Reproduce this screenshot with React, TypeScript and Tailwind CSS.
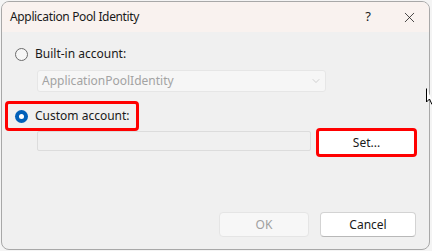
import { ChevronDown, X } from 'lucide-react'

function Radio({ checked }: { checked?: boolean }) {
  if (checked) {
    return (
      <span className="flex h-[13px] w-[13px] items-center justify-center rounded-full bg-[#005fb8]">
        <span className="h-[5px] w-[5px] rounded-full bg-white" />
      </span>
    )
  }
  return <span className="h-[13px] w-[13px] rounded-full border border-[#6b6b6b] bg-[#f6f6f6]" />
}

export default function App() {
  return (
    <div className="relative h-[251px] w-[432px] overflow-hidden bg-[#f4f4f4] text-[12px] text-[#1a1a1a]" style={{ fontFamily: '"Noto Sans", Arial, sans-serif' }}>
      <div className="ml-px mt-px flex h-[249px] w-[429px] flex-col overflow-hidden rounded-lg border border-[#a8a8a8] bg-[#f0f0f0]">
        <div className="flex h-[30px] shrink-0 items-center bg-[#f9f2ef] pl-[8px]">
          <span className="flex-1 tracking-[-0.35px]">Application Pool Identity</span>
          <span className="mr-[30px] text-[13px]">?</span>
          <X size={17} strokeWidth={1.1} className="mr-[11px] text-[#1a1a1a]" />
        </div>

        <div className="flex flex-1 flex-col pl-[3px]">
          <div className="ml-[10px] mt-[14px] flex h-[16px] items-center gap-[7px]">
            <Radio />
            <span>Built-in account:</span>
          </div>

          <div className="ml-[32px] mt-[8px] flex h-[22px] w-[289px] items-center justify-between rounded-[3px] border border-[#e6e6e6] bg-[#f6f6f6] pl-[4px] pr-[3px] text-[#a3a3a3]">
            <span>ApplicationPoolIdentity</span>
            <ChevronDown size={12} strokeWidth={1.2} className="text-[#b5b5b5]" />
          </div>

          <div className="mt-[9px] flex h-[30px] w-[134px] items-center gap-[7px] rounded-[4px] border-[3px] border-[#ff0000] pl-[7px]">
            <Radio checked />
            <span>Custom account:</span>
          </div>

          <div className="-mt-[3px] flex h-[29px] items-start">
            <div className="ml-[32px] mt-[3px] h-[20px] w-[274px] rounded-[2px] border border-[#dcdcdc] bg-[#f0f0f0]" />
            <div className="ml-[5px] h-[29px] w-[101px] rounded-[4px] border-[3px] border-[#ff0000]">
              <div className="flex h-full w-full items-center justify-center rounded-[2px] bg-white">Set...</div>
            </div>
          </div>

          <div className="mt-auto mb-[12px] mr-[13px] flex justify-end gap-[11px]">
            <button className="h-[25px] w-[90px] rounded-[4px] border border-[#e5e5e5] bg-[#f7f7f7] text-[#a0a0a0]">OK</button>
            <button className="h-[25px] w-[96px] rounded-[4px] border border-[#d3d3d3] border-b-[#b8b8b8] bg-white">Cancel</button>
          </div>
        </div>
      </div>

      <svg className="absolute left-[426px] top-[88px]" width="8" height="17" viewBox="0 0 8 17">
        <path d="M0.5 0.5 L0.5 14 L3.5 11 L6 16.5 L8 16" fill="white" stroke="black" strokeWidth="1" />
      </svg>
    </div>
  )
}
